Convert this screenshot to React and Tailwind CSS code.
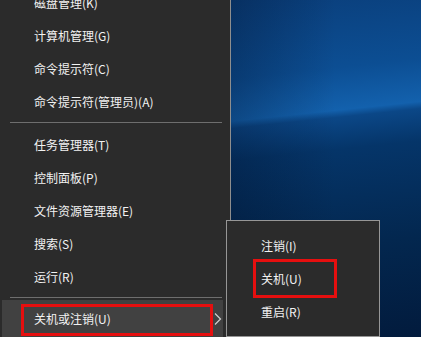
export default function App() {
  const top = ['磁盘管理(K)', '计算机管理(G)', '命令提示符(C)', '命令提示符(管理员)(A)']
  const mid = ['任务管理器(T)', '控制面板(P)', '文件资源管理器(E)', '搜索(S)', '运行(R)']

  const Item = ({ label }) => (
    <div className="h-[33px] flex items-center pl-[34px] text-[12px] text-[#f2f2f2]">{label}</div>
  )

  return (
    <div className="relative w-[421px] h-[337px] overflow-hidden flex font-['Noto_Sans_CJK_SC','Noto_Sans',sans-serif]">
      {/* Win+X menu */}
      <div className="w-[231px] shrink-0 bg-[#2b2b2b] border-r border-[#8e8e8e] overflow-hidden">
        <div className="-mt-[14px]">
          {top.map(t => <Item key={t} label={t} />)}
          <div className="pt-[4px] pb-[5px] pl-[10px] pr-[8px]">
            <div className="h-px bg-[#6e6e6e]" />
          </div>
          {mid.map(t => <Item key={t} label={t} />)}
          <div className="pt-[4px] pb-[2px] pl-[10px] pr-[8px]">
            <div className="h-px bg-[#6e6e6e]" />
          </div>
          <div className="relative ml-[2px] w-[221px] h-[38px] bg-[#414141] flex items-center pl-[32px] text-[12px] text-[#f2f2f2]">
            关机或注销(U)
            <div className="absolute left-[19px] top-[4px] w-[192px] h-[32px] border-[3px] border-[#e60f0f]" />
            <svg className="absolute left-[212px] top-[13px]" width="8" height="12" viewBox="0 0 8 12">
              <path d="M1 0.5 L6.5 6 L1 11.5" fill="none" stroke="#d0d0d0" strokeWidth="1.2" />
            </svg>
          </div>
        </div>
      </div>

      {/* desktop */}
      <div className="flex-1 bg-[linear-gradient(90deg,rgba(0,8,28,0.28),rgba(0,0,0,0)_55%),linear-gradient(174deg,#0a3f7c_0%,#0c4e93_22%,#1361ad_34%,#0b4787_36%,#053569_45%,#03274f_72%,#021b3d_100%)]" />

      {/* submenu */}
      <div className="absolute left-[226px] top-[220px] w-[154px] h-[117px] bg-[#2b2b2b] border border-[#969696] pt-[8px]">
        <div className="h-[33px] flex items-center pl-[34px] text-[12px] text-[#f2f2f2]">注销(I)</div>
        <div className="relative h-[33px] flex items-center pl-[34px] text-[12px] text-[#f2f2f2]">
          关机(U)
          <div className="absolute left-[26px] top-[-3px] w-[84px] h-[39px] border-[3px] border-[#e60f0f]" />
        </div>
        <div className="h-[33px] flex items-center pl-[34px] text-[12px] text-[#f2f2f2]">重启(R)</div>
      </div>
    </div>
  )
}
